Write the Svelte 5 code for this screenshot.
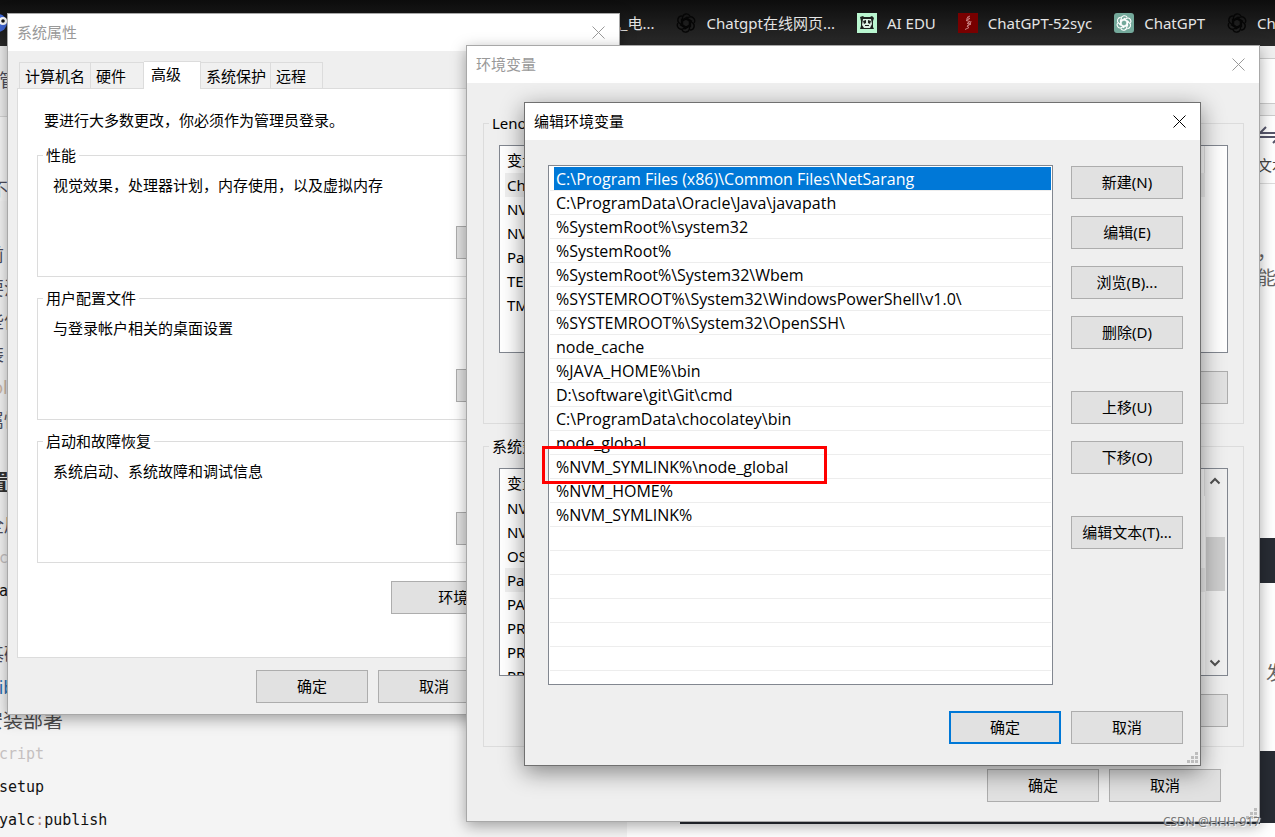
<script lang="ts">
  const paths = [
    'C:\\Program Files (x86)\\Common Files\\NetSarang',
    'C:\\ProgramData\\Oracle\\Java\\javapath',
    '%SystemRoot%\\system32',
    '%SystemRoot%',
    '%SystemRoot%\\System32\\Wbem',
    '%SYSTEMROOT%\\System32\\WindowsPowerShell\\v1.0\\',
    '%SYSTEMROOT%\\System32\\OpenSSH\\',
    'node_cache',
    '%JAVA_HOME%\\bin',
    'D:\\software\\git\\Git\\cmd',
    'C:\\ProgramData\\chocolatey\\bin',
    'node_global',
    '%NVM_SYMLINK%\\node_global',
    '%NVM_HOME%',
    '%NVM_SYMLINK%'
  ];
  const emptyRows = Array(7).fill('');

  const tabs = ['计算机名', '硬件', '高级', '系统保护', '远程'];
  let activeTab = $state('高级');
  let selected = $state(0);

  const sections = [
    { title: '性能', text: '视觉效果，处理器计划，内存使用，以及虚拟内存' },
    { title: '用户配置文件', text: '与登录帐户相关的桌面设置' },
    { title: '启动和故障恢复', text: '系统启动、系统故障和调试信息' }
  ];

  const variableGroups = [
    {
      title: 'Lenovo 的用户变量(U)',
      rows: ['ChocolateyLastPathUpdate', 'NVM_HOME', 'NVM_SYMLINK', 'Path', 'TEMP', 'TMP'],
      current: 0,
      scroll: false
    },
    {
      title: '系统变量(S)',
      rows: ['NVM_HOME', 'NVM_SYMLINK', 'OS', 'Path', 'PATHEXT', 'PROCESSOR_ARCHITECTURE', 'PROCESSOR_IDENTIFIER', 'PROCESSOR_LEVEL'],
      current: 3,
      scroll: true
    }
  ];

  const actionGroups = [
    ['新建(N)', '编辑(E)', '浏览(B)...', '删除(D)'],
    ['上移(U)', '下移(O)'],
    ['编辑文本(T)...']
  ];

  const bookmarks = [
    { label: '手机_电...', icon: '' },
    { label: 'Chatgpt在线网页...', icon: 'knot' },
    { label: 'AI EDU', icon: 'panda' },
    { label: 'ChatGPT-52syc', icon: 'red' },
    { label: 'ChatGPT', icon: 'green' },
    { label: 'ChatGPT', icon: 'knot' }
  ];
</script>

{#snippet closeIcon()}
  <svg width="13" height="13" viewBox="0 0 13 13" aria-hidden="true">
    <path d="M0.5 0.5L12.5 12.5M12.5 0.5L0.5 12.5" fill="none" stroke="currentColor" stroke-width="1" />
  </svg>
{/snippet}

{#snippet knot(color: string)}
  {#each [0, 60, 120, 180, 240, 300] as angle}
    <path
      d="M6.500 8V4.500a4 4 0 0 1 7.500-1.500M6.500 8l4.500-2.600 5 2.900"
      transform={`rotate(${angle} 10 10)`}
      fill="none"
      stroke={color}
      stroke-width="1.4"
    />
  {/each}
{/snippet}

{#snippet grip()}
  <svg class="grip" width="12" height="12" viewBox="0 0 12 12" aria-hidden="true">
    <path d="M8 0h3v3h-3zM4 4h3v3h-3zM8 4h3v3h-3zM0 8h3v3h-3zM4 8h3v3h-3zM8 8h3v3h-3z" fill="#bdbdbd" />
  </svg>
{/snippet}

<div class="desktop">
  <!-- Browser page behind the dialogs -->
  <nav class="bookmarks">
    <svg class="eye" width="20" height="20" viewBox="0 0 20 20" aria-hidden="true">
      <circle cx="10" cy="10" r="9" fill="#4169d8" />
      <circle cx="15" cy="8" r="4" fill="#fff" />
      <circle cx="15" cy="8" r="1.8" fill="#111" />
    </svg>
    {#each bookmarks as bookmark}
      <a href="#top">
        {#if bookmark.icon}
          <svg width="20" height="20" viewBox="0 0 20 20" aria-hidden="true">
            {#if bookmark.icon === 'knot'}
              {@render knot('#060606')}
            {:else if bookmark.icon === 'green'}
              <rect width="20" height="20" rx="3" fill="#74a99b" />
              <g transform="translate(2 2) scale(0.8)">{@render knot('#fff')}</g>
            {:else if bookmark.icon === 'panda'}
              <rect width="20" height="20" fill="#b9f6d0" />
              <path d="M3 4l3-1 1 1h6l2-1 2 2-1 3v6l1 2H3l1-3V8z" fill="#1b211d" />
              <path d="M6 6h8l1 5-2 4H7l-2-3z" fill="#dcefe3" />
              <path d="M6 8l3-1v3l-2 1zM11 7l3 1-1 3-2-1zM8 12h4v1H8z" fill="#1b211d" />
            {:else}
              <rect width="20" height="20" fill="#780000" />
              <path d="M12 3l-3 1.500 3 1-4 2 4 1-3 2 4 0.500-4 2 2 1.500-4 2M9 5v3M12 10l-3 4M13 8l-1 4" fill="none" stroke="#c87f7f" stroke-width="1" />
            {/if}
          </svg>
        {/if}
        <span>{bookmark.label}</span>
      </a>
    {/each}
  </nav>

  <div class="page">
    <article class="notes">
      <div class="toolbar">管理</div>
      <div class="crumb">不同</div>
      <p>前</p>
      <p>要注</p>
      <p>些依</p>
      <p>装</p>
      <p class="orange">fold</p>
      <p>属性</p>
      <h2>置</h2>
      <p>全局</p>
      <code class="faint">c</code>
      <code>a</code>
      <p class="spaced">基础</p>
      <p class="blue">lib</p>
      <h3>安装部署</h3>
      <code class="faint">cript</code>
      <code>setup</code>
      <code>yalc<i>:</i>publish</code>
    </article>
    <main class="preview">
      <aside>
        <div class="strip"></div>
        <div class="blank"></div>
        <div class="strip thin"></div>
        <div class="tool">
          <svg width="24" height="18" viewBox="0 0 24 18" aria-hidden="true">
            <path d="M24 7H3L9 1M0 11h22l-6 6" fill="none" stroke="#55556a" stroke-width="2" />
          </svg>
          <span>文本</span>
        </div>
        <p class="first">，</p>
        <p>能</p>
        <div class="dark short"></div>
        <p class="last">发</p>
        <div class="dark"></div>
      </aside>
      <div class="codeblock"></div>
    </main>
  </div>

  <!-- System properties -->
  <section class="window properties" aria-labelledby="properties-title">
    <header>
      <h1 id="properties-title">系统属性</h1>
      <button class="close" aria-label="关闭">{@render closeIcon()}</button>
    </header>
    <div class="tabs" role="tablist">
      {#each tabs as tab}
        <button role="tab" aria-selected={activeTab === tab} class:active={activeTab === tab} onclick={() => (activeTab = tab)}>{tab}</button>
      {/each}
    </div>
    <div class="panel">
      <p class="intro">要进行大多数更改，你必须作为管理员登录。</p>
      {#each sections as section}
        <fieldset>
          <legend>{section.title}</legend>
          <p>{section.text}</p>
          <button class="btn">设置</button>
        </fieldset>
      {/each}
      <button class="btn wide">环境变量(N)...</button>
    </div>
    <footer>
      <button class="btn">确定</button>
      <button class="btn">取消</button>
      <button class="btn">应用(A)</button>
    </footer>
  </section>

  <!-- Environment variables -->
  <section class="window variables" aria-labelledby="variables-title">
    <header>
      <h1 id="variables-title">环境变量</h1>
      <button class="close" aria-label="关闭">{@render closeIcon()}</button>
    </header>
    {#each variableGroups as group}
      <fieldset>
        <legend>{group.title}</legend>
        <div class="listview">
          <table>
            <thead>
              <tr><th>变量</th></tr>
            </thead>
            <tbody>
              {#each group.rows as row, i}
                <tr class:current={i === group.current}><td>{row}</td></tr>
              {/each}
            </tbody>
          </table>
          <div class="track" class:scroll={group.scroll}>
            {#if group.scroll}
              <svg width="12" height="8" viewBox="0 0 12 8" aria-hidden="true"><path d="M1.500 6.500L6 2l4.500 4.500" fill="none" stroke="#505050" stroke-width="2" /></svg>
              <span class="thumb"></span>
              <svg width="12" height="8" viewBox="0 0 12 8" aria-hidden="true"><path d="M1.500 1.500L6 6l4.500-4.500" fill="none" stroke="#505050" stroke-width="2" /></svg>
            {/if}
          </div>
        </div>
        <button class="btn">删除</button>
      </fieldset>
    {/each}
    <footer>
      <button class="btn">确定</button>
      <button class="btn">取消</button>
    </footer>
    {@render grip()}
  </section>

  <!-- Edit environment variable -->
  <section class="window editor" role="dialog" aria-labelledby="editor-title">
    <header>
      <h1 id="editor-title">编辑环境变量</h1>
      <button class="close" aria-label="关闭">{@render closeIcon()}</button>
    </header>
    <div class="content">
      <ul class="paths">
        {#each paths as path, i}
          <li><button class:selected={selected === i} onclick={() => (selected = i)}>{path}</button></li>
        {/each}
        {#each emptyRows as _}
          <li></li>
        {/each}
      </ul>
      <div class="actions">
        {#each actionGroups as group}
          <div class="action-group">
            {#each group as action}
              <button class="btn">{action}</button>
            {/each}
          </div>
        {/each}
      </div>
    </div>
    <footer>
      <button class="btn default">确定</button>
      <button class="btn">取消</button>
    </footer>
    <div class="marker"></div>
    {@render grip()}
  </section>

  <span class="watermark">CSDN @HHH-917</span>
</div>

<style>
  :global(body) {
    margin: 0;
  }

  .desktop {
    position: relative;
    display: flex;
    flex-direction: column;
    height: 100vh;
    overflow: hidden;
    background: #fff;
    font-family: "Noto Sans", "Noto Sans CJK SC", sans-serif;
    font-size: 15px;
    line-height: 20px;
    color: #000;
  }

  .desktop * {
    box-sizing: border-box;
  }

  h1, h2, h3, p, ul, fieldset {
    margin: 0;
    padding: 0;
  }

  button {
    font: inherit;
    color: inherit;
    padding: 0;
  }

  /* Bookmarks bar */
  .bookmarks {
    position: relative;
    display: flex;
    justify-content: flex-end;
    align-items: center;
    gap: 22px;
    height: 46px;
    flex: none;
    background: linear-gradient(#0d0d0d, #2b2b2b);
    margin-right: -43px;
  }

  .bookmarks a {
    display: flex;
    align-items: center;
    gap: 10px;
    color: #e4e4e4;
    text-decoration: none;
    white-space: nowrap;
  }

  .eye {
    position: absolute;
    left: -12px;
    top: 13px;
  }

  /* Page */
  .page {
    display: flex;
    flex: 1;
    min-height: 0;
  }

  .notes {
    width: 627px;
    flex: none;
    background: #f4f4f4;
    overflow: hidden;
    color: #4d4d5c;
    font-size: 18px;
    line-height: 33px;
  }

  .notes p {
    margin-left: -14px;
  }

  .notes h2 {
    margin: 28px 0 11px -13px;
    font-size: 22px;
    color: #333;
  }

  .notes h3 {
    margin-left: -17px;
    margin-bottom: 1px;
    font-size: 20px;
    font-weight: 400;
    color: #4d4d4d;
  }

  .notes .spaced {
    margin-top: 30px;
  }

  .notes .blue {
    color: #2a6fb0;
    margin-left: -6px;
  }

  .notes .orange {
    color: #cdb8a6;
  }

  .notes code {
    display: block;
    margin-left: -1px;
    font-family: "DejaVu Sans Mono", monospace;
    font-size: 15px;
    color: #111;
  }

  .notes code.faint {
    color: #c5c0c0;
  }

  .notes i {
    font-style: normal;
    color: #b08070;
  }

  .toolbar {
    height: 71px;
    padding-top: 18px;
    text-indent: -1px;
    background: #eee;
    border-bottom: 1px solid #d5d5d5;
  }

  .crumb {
    height: 84px;
    margin-bottom: 38px;
    padding-top: 56px;
    text-indent: -10px;
    background: #f7f7f7;
  }

  .preview {
    flex: 1;
    min-width: 0;
    display: flex;
    flex-direction: column;
    align-items: flex-end;
  }

  aside {
    width: 15px;
    font-size: 19px;
    line-height: 26px;
    color: #666;
    white-space: nowrap;
  }

  aside p {
    margin-left: -3px;
  }

  .strip {
    height: 13px;
    background: #f0f0f0;
    border-bottom: 1px solid #ccc;
  }

  .blank {
    height: 45px;
    border-bottom: 1px solid #ccc;
  }

  .strip.thin {
    height: 12px;
  }

  .tool {
    height: 68px;
    padding-top: 10px;
    border-bottom: 1px solid #ddd;
    font-size: 15px;
    color: #444;
  }

  .tool svg,
  .tool span {
    display: block;
    margin-left: -3px;
  }

  .tool span {
    margin-top: 8px;
  }

  aside .first {
    margin-top: 55px;
  }

  aside .last {
    margin: 77px 0 65px 6px;
  }

  .dark {
    height: 72px;
    background: #282c34;
  }

  .dark.short {
    height: 45px;
    margin-top: 247px;
  }

  .codeblock {
    align-self: stretch;
    height: 2px;
    margin: -1px 15px 0 53px;
    background: #282c34;
    flex: none;
  }

  /* Windows */
  .window {
    position: absolute;
    display: flex;
    flex-direction: column;
    background: #efefef;
    border: 1px solid #a8a8a8;
    box-shadow: 0 4px 14px rgba(0, 0, 0, 0.35);
  }

  .window header {
    display: flex;
    justify-content: space-between;
    align-items: center;
    height: 37px;
    padding: 0 14px 0 9px;
    background: #fff;
    color: #999;
  }

  .window h1 {
    padding-bottom: 2px;
    font-size: 15px;
    font-weight: 400;
  }

  .close {
    display: flex;
    border: 0;
    background: none;
  }

  .btn {
    width: 112px;
    height: 33px;
    flex: none;
    padding-bottom: 2px;
    border: 1px solid #adadad;
    background: #e1e1e1;
  }

  .btn.default {
    border: 2px solid #0078d7;
  }

  .window footer {
    display: flex;
    justify-content: flex-end;
    gap: 10px;
  }

  .grip {
    position: absolute;
    right: 1px;
    bottom: 1px;
  }

  fieldset {
    min-width: 0;
    border: 1px solid #dcdcdc;
    display: flex;
    flex-direction: column;
  }

  legend {
    padding: 0 3px;
  }

  .properties {
    left: 7px;
    top: 13px;
    width: 613px;
  }

  .tabs {
    display: flex;
    align-items: flex-end;
    height: 37px;
    padding-left: 11px;
  }

  .tabs button {
    height: 26px;
    padding: 0 4px 0 5px;
    border: 1px solid #dcdcdc;
    border-width: 1px 1px 0 0;
    background: #f0f0f0;
    text-align: left;
  }

  .tabs button:first-child {
    width: 72px;
    border-left-width: 1px;
  }

  .tabs button:nth-child(2) {
    width: 53px;
  }

  .tabs button:nth-child(5) {
    width: 52px;
  }

  .tabs button.active {
    z-index: 1;
    width: 57px;
    height: 28px;
    padding: 0 7px 3px;
    margin-bottom: -1px;
    background: #fff;
  }

  .panel {
    display: flex;
    flex-direction: column;
    gap: 11px;
    height: 570px;
    margin: 0 9px;
    padding: 21px 19px;
    background: #fff;
    border: 1px solid #dcdcdc;
  }

  .intro {
    padding-left: 7px;
    margin-bottom: 4px;
  }

  .panel fieldset {
    height: 132px;
    padding: 0 21px 17px 5px;
  }

  .panel fieldset p {
    margin-top: 10px;
    padding-left: 10px;
  }

  .panel fieldset .btn {
    align-self: flex-end;
    margin-top: 31px;
  }

  .panel .wide {
    width: 187px;
    margin-top: 7px;
    align-self: flex-end;
    margin-right: 12px;
  }

  .properties footer {
    padding: 12px 7px 11px;
  }

  .variables {
    left: 466px;
    top: 45px;
    width: 794px;
    height: 777px;
  }

  .variables fieldset {
    height: 311px;
    margin: 0 15px 12px 16px;
    padding: 0 15px 19px 5px;
  }

  .variables header + fieldset {
    margin-top: 30px;
  }

  .variables fieldset .btn {
    align-self: flex-end;
    margin-top: 18px;
  }

  .listview {
    display: flex;
    height: 208px;
    margin-top: 12px;
    margin-left: 10px;
    border: 1px solid #828790;
    background: #fff;
    overflow: hidden;
  }

  table {
    flex: 1;
    align-self: flex-start;
    border-spacing: 0;
    margin-left: 5px;
  }

  th, td {
    height: 24px;
    padding: 0 2px;
    text-align: left;
    font-weight: 400;
  }

  th {
    height: 27px;
    border-right: 1px solid #e5e5e5;
  }

  .current td {
    background: #f0f0f0;
  }

  .track {
    display: flex;
    flex-direction: column;
    align-items: center;
    width: 22px;
    padding: 8px 2px 8px 0;
  }

  .track.scroll {
    background: #f0f0f0;
  }

  .thumb {
    width: 19px;
    height: 54px;
    margin: 52px 0 auto;
    background: #cdcdcd;
  }

  .variables footer {
    padding: 10px 38px 0 0;
  }

  .editor {
    left: 524px;
    top: 102px;
    width: 677px;
    height: 664px;
    border-color: #707070;
    box-shadow: 0 6px 22px rgba(0, 0, 0, 0.45);
  }

  .editor header {
    color: #000;
  }

  .content {
    display: flex;
    gap: 18px;
    padding: 25px 17px 26px 23px;
  }

  .paths {
    flex: 1;
    height: 520px;
    border: 1px solid #828790;
    padding: 1px;
    background: #fff;
    list-style: none;
    font-family: "Open Sans", "Noto Sans CJK SC", sans-serif;
    font-size: 16px;
    overflow: hidden;
  }

  .paths li {
    height: 24px;
    padding-left: 4px;
    border-bottom: 1px solid #ededed;
  }

  .paths button {
    display: block;
    width: 100%;
    height: 23px;
    padding: 0 2px;
    border: 0;
    background: none;
    text-align: left;
  }

  .paths button.selected {
    background: #0078d7;
    color: #fff;
  }

  .actions {
    display: flex;
    flex-direction: column;
    gap: 42px;
    padding-top: 1px;
  }

  .action-group {
    display: flex;
    flex-direction: column;
    gap: 17px;
  }

  .editor footer {
    padding: 0 17px;
  }

  /* Highlight around the node_global entry */
  .marker {
    position: absolute;
    left: 17px;
    top: 343px;
    width: 285px;
    height: 38px;
    border: 3px solid #f00;
    pointer-events: none;
  }

  .watermark {
    position: absolute;
    right: 15px;
    bottom: 5px;
    font-size: 12px;
    color: #777;
    text-shadow: 1px 1px 1px #fff;
  }
</style>
